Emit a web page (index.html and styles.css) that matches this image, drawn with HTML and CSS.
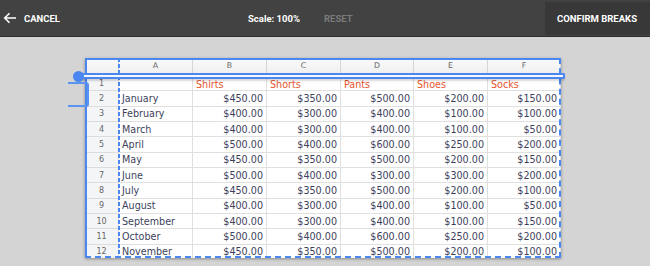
FILE: index.html
```html
<!DOCTYPE html>
<html>
<head>
<meta charset="utf-8">
<link rel="stylesheet" href="styles.css">
</head>
<body>
<header class="toolbar">
  <div class="cancel">
    <svg class="back" width="14" height="12" viewBox="0 0 14 12"><path d="M13 6H2M6.5 1.2L1.7 6l4.8 4.8" fill="none" stroke="#fff" stroke-width="1.6"/></svg>
    <span>CANCEL</span>
  </div>
  <div class="scale">Scale: 100%</div>
  <div class="reset">RESET</div>
  <div class="confirm">CONFIRM BREAKS</div>
</header>
<main class="stage">
  <div class="sheet">
    <div class="grid">
      <div class="ch corner"></div><div class="ch">A</div><div class="ch">B</div><div class="ch">C</div><div class="ch">D</div><div class="ch">E</div><div class="ch">F</div>

      <div class="rh">1</div><div class="c"></div><div class="c hd">Shirts</div><div class="c hd">Shorts</div><div class="c hd">Pants</div><div class="c hd">Shoes</div><div class="c hd">Socks</div>
      <div class="rh">2</div><div class="c">January</div><div class="c n">$450.00</div><div class="c n">$350.00</div><div class="c n">$500.00</div><div class="c n">$200.00</div><div class="c n">$150.00</div>
      <div class="rh">3</div><div class="c">February</div><div class="c n">$400.00</div><div class="c n">$300.00</div><div class="c n">$400.00</div><div class="c n">$100.00</div><div class="c n">$100.00</div>
      <div class="rh">4</div><div class="c">March</div><div class="c n">$400.00</div><div class="c n">$300.00</div><div class="c n">$400.00</div><div class="c n">$100.00</div><div class="c n">$50.00</div>
      <div class="rh">5</div><div class="c">April</div><div class="c n">$500.00</div><div class="c n">$400.00</div><div class="c n">$600.00</div><div class="c n">$250.00</div><div class="c n">$200.00</div>
      <div class="rh">6</div><div class="c">May</div><div class="c n">$450.00</div><div class="c n">$350.00</div><div class="c n">$500.00</div><div class="c n">$200.00</div><div class="c n">$150.00</div>
      <div class="rh">7</div><div class="c">June</div><div class="c n">$500.00</div><div class="c n">$400.00</div><div class="c n">$300.00</div><div class="c n">$300.00</div><div class="c n">$200.00</div>
      <div class="rh">8</div><div class="c">July</div><div class="c n">$450.00</div><div class="c n">$350.00</div><div class="c n">$500.00</div><div class="c n">$200.00</div><div class="c n">$100.00</div>
      <div class="rh">9</div><div class="c">August</div><div class="c n">$400.00</div><div class="c n">$300.00</div><div class="c n">$400.00</div><div class="c n">$100.00</div><div class="c n">$50.00</div>
      <div class="rh">10</div><div class="c">September</div><div class="c n">$400.00</div><div class="c n">$300.00</div><div class="c n">$400.00</div><div class="c n">$100.00</div><div class="c n">$150.00</div>
      <div class="rh">11</div><div class="c">October</div><div class="c n">$500.00</div><div class="c n">$400.00</div><div class="c n">$600.00</div><div class="c n">$250.00</div><div class="c n">$200.00</div>
      <div class="rh">12</div><div class="c">November</div><div class="c n">$450.00</div><div class="c n">$350.00</div><div class="c n">$500.00</div><div class="c n">$200.00</div><div class="c n">$100.00</div>
    </div>
    <div class="frame"></div>
    <div class="vbreak"></div>
  </div>
  <div class="hbreak"></div>
  <div class="knob"></div>
  <div class="bracket"></div>
</main>
</body>
</html>
```
FILE: styles.css
```css
html, body {
  margin: 0;
  padding: 0;
  width: 650px;
  height: 266px;
  overflow: hidden;
  background: #d4d4d4;
}

.toolbar {
  display: flex;
  align-items: center;
  height: 36px;
  background: #424242;
  border-bottom: 1px solid #2c2c2c;
  font-family: Roboto, "Liberation Sans", sans-serif;
  font-weight: 700;
  font-size: 9.5px;
  color: #ffffff;
}

.cancel {
  display: flex;
  align-items: center;
  padding-left: 3px;
}

.back {
  margin-right: 7px;
}

.scale {
  margin-left: 188px;
}

.reset {
  margin-left: 24px;
  color: #7a7a7a;
}

.confirm {
  margin-left: auto;
  align-self: stretch;
  display: flex;
  align-items: center;
  margin-top: 2px;
  margin-bottom: 1px;
  padding: 0 13px 0 12px;
  background: #383838;
}

.stage {
  position: relative;
  box-sizing: border-box;
  padding: 21px 0 0 85px;
  height: 229px;
}

.sheet {
  position: relative;
  width: 476px;
  height: 200px;
  overflow: hidden;
  background: #fff;
  box-shadow: 0 1px 3px rgba(0, 0, 0, 0.35);
}

.grid {
  display: grid;
  grid-template-columns: 34px 74px 74px 74px 73px 74px 73px;
  grid-template-rows: 18px;
  grid-auto-rows: 15.33px;
  font-family: "DejaVu Sans", Verdana, sans-serif;
  font-size: 9.6px;
  color: #3d3f5c;
}

.ch, .rh, .c {
  box-sizing: border-box;
  border-right: 1px solid #e0e0e0;
  border-bottom: 1px solid #e0e0e0;
  white-space: nowrap;
  overflow: hidden;
  display: flex;
  align-items: center;
}

.ch {
  justify-content: center;
  background: linear-gradient(#fbfbfb, #eeeeee);
  border-color: #d6d6d6;
  font-size: 7.8px;
  color: #666;
  padding-bottom: 3px;
}

.rh {
  justify-content: center;
  background: #f4f5f7;
  border-color: #dcdcdc;
  font-size: 8px;
  color: #666;
}

.c {
  padding: 0 3px;
}

.c.n {
  justify-content: flex-end;
}

.c.hd {
  color: #e6552d;
  padding-top: 2px;
}

.frame {
  position: absolute;
  inset: 0;
  border-left: 2px solid #4b87f0;
  border-top: 2px solid #4b87f0;
  border-right: 2px dashed #4b87f0;
  border-bottom: 2px dashed #4b87f0;
  pointer-events: none;
}

.vbreak {
  position: absolute;
  left: 33px;
  top: 0;
  bottom: 0;
  width: 2px;
  background: repeating-linear-gradient(#4b87f0 0 4px, transparent 4px 6px);
}

.hbreak {
  position: absolute;
  left: 76px;
  top: 36px;
  width: 487px;
  height: 2px;
  border-top: 2px solid #4b87f0;
  border-bottom: 2px solid #4b87f0;
  border-right: 2px solid #4b87f0;
  border-radius: 0 2px 2px 0;
  background: #f3f7ff;
  box-shadow: 0 2px 2px rgba(0, 0, 0, 0.15);
}

.knob {
  position: absolute;
  left: 73px;
  top: 34px;
  width: 11px;
  height: 11px;
  border-radius: 50%;
  background: #4b87f0;
}

.bracket {
  position: absolute;
  left: 68px;
  top: 45px;
  width: 19px;
  height: 21px;
  border: 2px solid #5b93f2;
  border-left: none;
  border-radius: 0 3px 3px 0;
}
```
